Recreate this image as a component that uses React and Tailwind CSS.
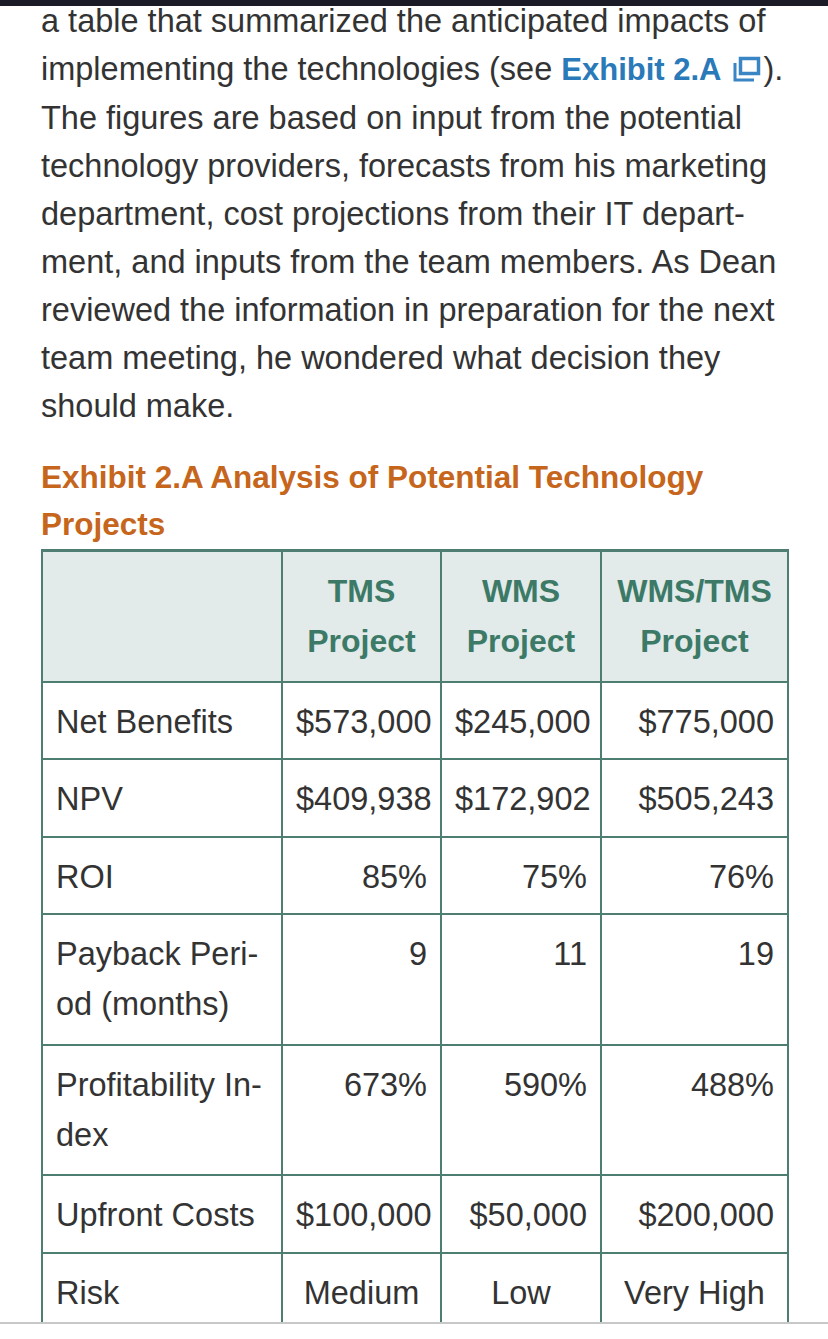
const rows = [
  { label: "Net Benefits", values: ["$573,000", "$245,000", "$775,000"] },
  { label: "NPV", values: ["$409,938", "$172,902", "$505,243"] },
  { label: "ROI", values: ["85%", "75%", "76%"] },
  { label: ["Payback Peri-", "od (months)"], values: ["9", "11", "19"] },
  { label: ["Profitability In-", "dex"], values: ["673%", "590%", "488%"] },
  { label: "Upfront Costs", values: ["$100,000", "$50,000", "$200,000"] },
  { label: "Risk", values: ["Medium", "Low", "Very High"], center: true },
];

const lines = [
  "a table that summarized the anticipated impacts of",
  null,
  "The figures are based on input from the potential",
  "technology providers, forecasts from his marketing",
  "department, cost projections from their IT depart-",
  "ment, and inputs from the team members. As Dean",
  "reviewed the information in preparation for the next",
  "team meeting, he wondered what decision they",
  "should make.",
];

function PopupIcon() {
  return (
    <svg
      width="30"
      height="28"
      viewBox="0 0 30 28"
      className="inline-block align-[-3px] ml-[10px] mr-[2px]"
      fill="none"
      stroke="#3a86c4"
    >
      <path d="M3 8 V25 H22" strokeWidth="3" />
      <rect x="8.5" y="3.5" width="18" height="15" strokeWidth="3.5" />
    </svg>
  );
}

function Cell({ children, className = "" }) {
  return (
    <td
      className={`border-2 border-[#4e7e72] px-[13px] align-top leading-[50px] ${className}`}
    >
      {children}
    </td>
  );
}

export default function App() {
  return (
    <div
      className="h-[1339px] flex flex-col overflow-hidden bg-white text-[#333333]"
      style={{ fontFamily: '"Liberation Sans", Arial, sans-serif' }}
    >
      <div className="h-[6px] bg-[#1b1a27] relative z-10 shrink-0" />
      <div className="flex-1 overflow-hidden px-[41px]">
        <p className="-mt-[9px] text-[32.5px] leading-[48px] whitespace-nowrap">
          {lines.map((l, i) =>
            l === null ? (
              <span key={i} className="block">
                implementing the technologies (see{" "}
                <span className="font-bold text-[31px] text-[#2a79b9]">Exhibit 2.A</span>
                <PopupIcon />).
              </span>
            ) : (
              <span key={i} className="block">
                {l}
              </span>
            )
          )}
        </p>
        <h3 className="mt-[24px] text-[31.5px] leading-[47px] font-bold text-[#c6651c]">
          Exhibit 2.A Analysis of Potential Technology
          <br />
          Projects
        </h3>
        <table className="mt-[1px] w-[746px] table-fixed border-collapse text-[32.5px] border-t-[3px] border-[#4e7e72]">
          <colgroup>
            <col className="w-[240px]" />
            <col className="w-[159px]" />
            <col className="w-[160px]" />
            <col className="w-[187px]" />
          </colgroup>
          <thead>
            <tr className="bg-[#e2ebe9] text-[#3c7a67] font-bold text-[32px]">
              <Cell className="border-t-[3px] pt-[14px] pb-[15px]"></Cell>
              <Cell className="border-t-[3px] pt-[14px] pb-[15px] text-center">
                TMS
                <br />
                Project
              </Cell>
              <Cell className="border-t-[3px] pt-[14px] pb-[15px] text-center">
                WMS
                <br />
                Project
              </Cell>
              <Cell className="border-t-[3px] pt-[14px] pb-[15px] text-center px-[6px]">
                WMS/TMS
                <br />
                Project
              </Cell>
            </tr>
          </thead>
          <tbody>
            {rows.map((r) => {
              const two = Array.isArray(r.label);
              const pad = two ? "pt-[14px] pb-[14.5px]" : "pt-[14px] pb-[11.4px]";
              return (
                <tr key={two ? r.label[0] : r.label}>
                  <Cell className={`whitespace-nowrap ${pad}`}>
                    {two ? (
                      <>
                        {r.label[0]}
                        <br />
                        {r.label[1]}
                      </>
                    ) : (
                      r.label
                    )}
                  </Cell>
                  {r.values.map((v, i) => (
                    <Cell
                      key={i}
                      className={`whitespace-nowrap ${pad} ${r.center ? "text-center" : "text-right"}`}
                    >
                      {v}
                    </Cell>
                  ))}
                </tr>
              );
            })}
          </tbody>
        </table>
      </div>
      <div className="h-[17px] shrink-0 border-t-2 border-[#c8c8c8] bg-white" />
    </div>
  );
}
